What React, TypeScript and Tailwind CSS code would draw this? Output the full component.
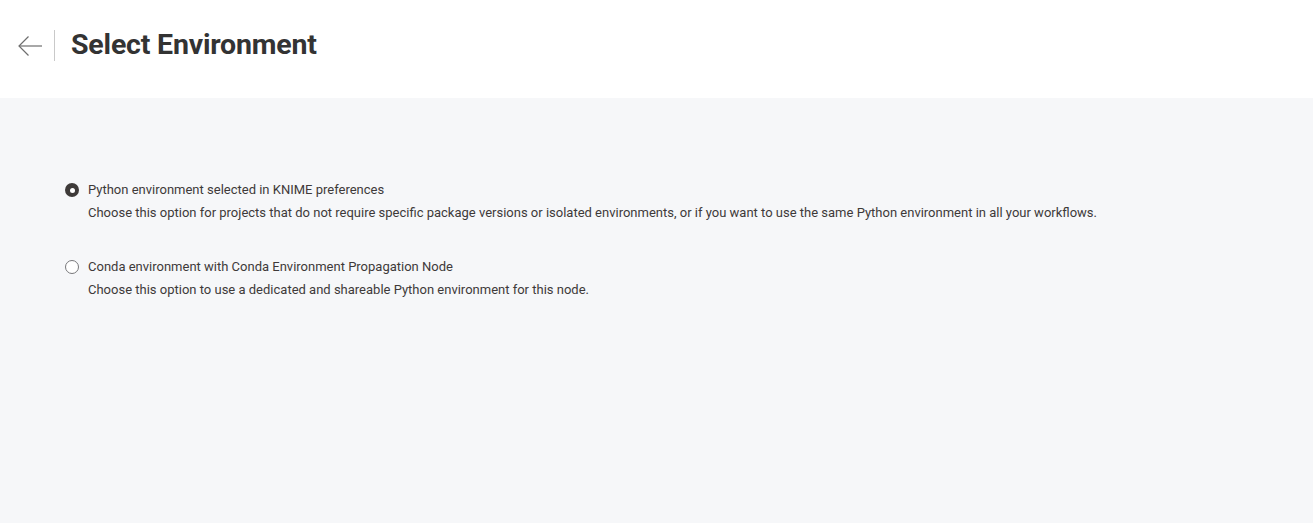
import { useState } from "react";

const options = [
  {
    id: "preferences",
    label: "Python environment selected in KNIME preferences",
    description:
      "Choose this option for projects that do not require specific package versions or isolated environments, or if you want to use the same Python environment in all your workflows.",
  },
  {
    id: "conda",
    label: "Conda environment with Conda Environment Propagation Node",
    description:
      "Choose this option to use a dedicated and shareable Python environment for this node.",
  },
];

const Radio = ({ checked }: { checked: boolean }) => {
  if (checked) {
    return (
      <span className="w-[14px] h-[14px] rounded-full bg-[#3e3a39] flex items-center justify-center shrink-0">
        <span className="w-[5px] h-[5px] rounded-full bg-white" />
      </span>
    );
  }
  return <span className="w-[14px] h-[14px] rounded-full border border-[#77777a] bg-white shrink-0" />;
};

export default function App() {
  const [selected, setSelected] = useState("preferences");

  return (
    <div className="h-[523px] flex flex-col bg-[#f6f7f9] font-['Roboto',sans-serif] text-[#3e3a39]">
      <header className="h-[98px] bg-white flex items-center pl-[16px] pb-[7px] shrink-0">
        <button className="w-[28px] h-[28px] flex items-center justify-center text-[#6e6e6e]">
          <svg width="28" height="24" viewBox="0 0 28 24" fill="none" stroke="currentColor" strokeWidth="1.2">
            <path d="M26 12H3" />
            <path d="M12.5 2.5L3 12l9.5 9.5" />
          </svg>
        </button>
        <div className="w-px h-[31px] bg-[#c9c9c9] ml-[10px] mr-[16px]" />
        <h1 className="text-[28.5px] font-bold text-[#333] tracking-[-0.2px]">Select Environment</h1>
      </header>

      <main className="flex-1 pt-[82px] pl-[65px] flex flex-col gap-[34px]">
        {options.map((o) => (
          <label key={o.id} className="flex flex-col cursor-pointer" onClick={() => setSelected(o.id)}>
            <div className="flex items-center gap-[9px] h-[20px]">
              <Radio checked={selected === o.id} />
              <span className="text-[13px] leading-[20px]">{o.label}</span>
            </div>
            <p className="text-[13px] leading-[20px] pl-[23px] mt-[3px]">{o.description}</p>
          </label>
        ))}
      </main>
    </div>
  );
}
